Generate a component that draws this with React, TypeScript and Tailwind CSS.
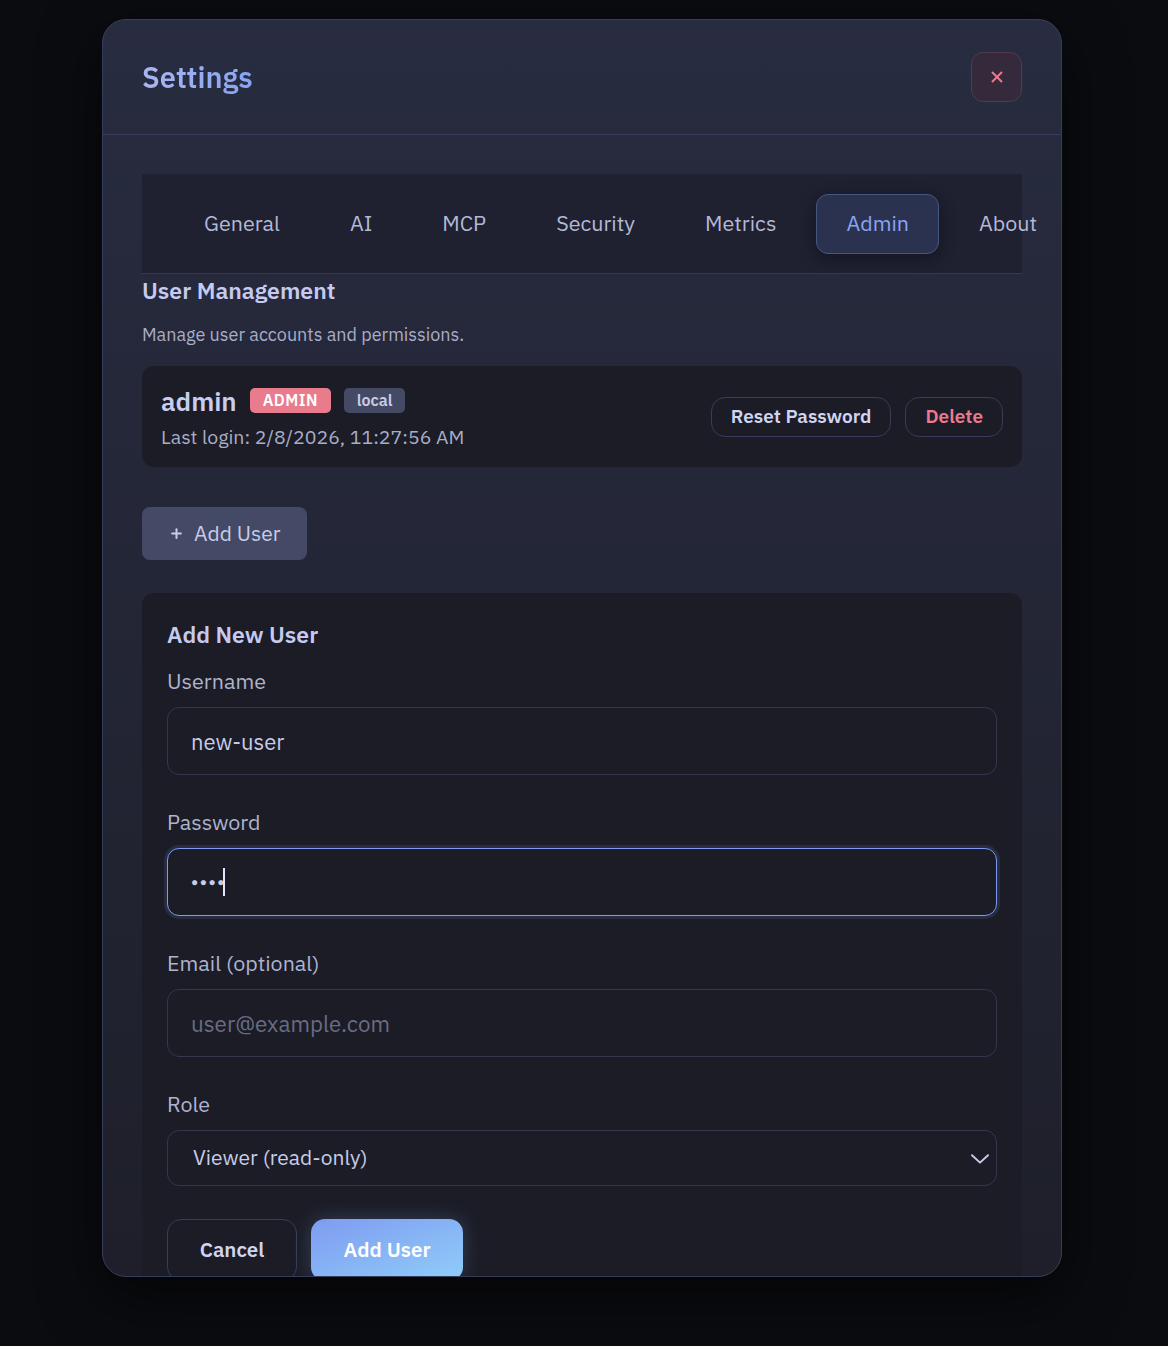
import { Plus, X } from "lucide-react";

const tabs = ["General", "AI", "MCP", "Security", "Metrics", "Admin", "About"];

const Field = ({ label, children }: { label: string; children: React.ReactNode }) => (
    <div className="flex flex-col gap-[13px]">
        <label className="text-[21.5px] leading-[26px] text-[#aeb3cf]">{label}</label>
        {children}
    </div>
);

export default function App() {
    return (
        <div className="min-h-[1346px] w-full bg-[#0b0c10] pt-[19px] font-['IBM_Plex_Sans','Noto_Sans',sans-serif]">
            <div className="ml-[102px] flex h-[1258px] w-[960px] flex-col overflow-hidden rounded-[24px] border border-[#363d5a] bg-[#22243a] bg-gradient-to-b from-[#282c40] to-[#1e1f2a] shadow-[0_20px_60px_rgba(0,0,0,0.6)]">
                {/* header */}
                <div className="flex items-center justify-between border-b border-[#363d5a] px-[39px] py-[32px]">
                    <h2 className="bg-gradient-to-r from-[#aab6f0] to-[#86a3f3] bg-clip-text text-[29px] font-semibold leading-[38px] text-transparent">
                        Settings
                    </h2>
                    <button className="flex h-[50px] w-[51px] items-center justify-center rounded-xl border border-[#553a4c] bg-[#352a3c] text-[#ec7a8c]">
                        <X size={18} strokeWidth={2.6} />
                    </button>
                </div>

                {/* body */}
                <div className="flex flex-col px-[39px] pt-[39px]">
                    <div className="flex h-[100px] items-center gap-[10px] border-b border-[#333954] bg-[#1f2030] pl-[32px]">
                        {tabs.map((t) =>
                            t === "Admin" ? (
                                <button
                                    key={t}
                                    className="h-[60px] shrink-0 rounded-xl border border-[#465683] bg-[#2b3250] px-[29px] text-[21.5px] text-[#89a5f3] shadow-[0_4px_16px_rgba(0,0,0,0.35)]"
                                >
                                    {t}
                                </button>
                            ) : (
                                <button key={t} className="h-[60px] shrink-0 px-[30px] text-[21.5px] text-[#b4b9d6]">
                                    {t}
                                </button>
                            )
                        )}
                    </div>

                    <h3 className="mt-[2px] text-[23px] font-semibold leading-[28px] text-[#c5cbf0]">User Management</h3>
                    <p className="mt-[19px] text-[18px] leading-[24px] text-[#a9adc6]">
                        Manage user accounts and permissions.
                    </p>

                    {/* user card */}
                    <div className="mt-[19px] flex h-[101px] items-center justify-between rounded-xl bg-[#1b1c26] px-[19px]">
                        <div className="flex flex-col gap-[6px] pt-[2px]">
                            <div className="flex items-center gap-[13px]">
                                <span className="text-[26px] font-semibold leading-[32px] text-[#c8cdf2]">admin</span>
                                <span className="rounded-[5px] bg-[#e97c8c] px-[13px] text-[16px] font-semibold leading-[25px] tracking-wide text-white">
                                    ADMIN
                                </span>
                                <span className="rounded-[5px] bg-[#444964] px-[13px] text-[16px] font-semibold leading-[25px] text-[#c8cce8]">
                                    local
                                </span>
                            </div>
                            <span className="text-[19.5px] leading-[28px] text-[#a9adc6]">Last login: 2/8/2026, 11:27:56 AM</span>
                        </div>
                        <div className="flex items-center gap-[14px]">
                            <button className="h-[40px] rounded-[14px] border border-[#363d5a] px-[19px] text-[19px] font-semibold text-[#d0d4f2]">
                                Reset Password
                            </button>
                            <button className="h-[40px] rounded-[14px] border border-[#363d5a] px-[19px] text-[19px] font-semibold text-[#ec7a8c]">
                                Delete
                            </button>
                        </div>
                    </div>

                    <div className="mt-[40px]">
                        <button className="flex h-[53px] items-center gap-[10px] rounded-lg bg-[#444a66] px-[27px] text-[21px] text-[#c8cce8]">
                            <Plus size={15} strokeWidth={3.2} />
                            Add User
                        </button>
                    </div>

                    {/* add new user form */}
                    <div className="mt-[33px] flex flex-col rounded-xl bg-[#1b1c26] px-[25px] pb-[30px] pt-[27px]">
                        <h4 className="text-[23px] font-semibold leading-[28px] text-[#c5cbf0]">Add New User</h4>
                        <div className="mt-[20px] flex flex-col gap-[34px]">
                            <Field label="Username">
                                <input
                                    readOnly
                                    value="new-user"
                                    className="h-[68px] rounded-xl border border-[#333850] bg-[#1b1c26] px-[23px] text-[22px] text-[#c8cce8] outline-none"
                                />
                            </Field>
                            <Field label="Password">
                                <div className="flex h-[68px] items-center rounded-xl border border-[#7b9af0] bg-[#1b1c26] px-[23px] shadow-[0_0_0_3px_rgba(90,110,170,0.2)]">
                                    <span className="text-[12px] tracking-[1.5px] text-[#c8cce8]">●●●●</span>
                                    <span className="ml-[-3px] h-[28px] w-[2px] bg-[#e0e4ff]" />
                                </div>
                            </Field>
                            <Field label="Email (optional)">
                                <input
                                    readOnly
                                    placeholder="user@example.com"
                                    className="h-[68px] rounded-xl border border-[#333850] bg-[#1b1c26] px-[23px] text-[22.4px] text-[#c8cce8] outline-none placeholder:text-[#686c84]"
                                />
                            </Field>
                            <Field label="Role">
                                <div className="flex h-[56px] items-center justify-between rounded-xl border border-[#333850] bg-[#1b1c26] pl-[25px] pr-[7px] text-[21px] text-[#c8cce8]">
                                    <span>Viewer (read-only)</span>
                                    <svg width="18" height="10" viewBox="0 0 18 10" fill="none" className="mt-[2px]">
                                        <path d="M1 1.2 9 8.6 17 1.2" stroke="#c8cce8" strokeWidth="1.9" strokeLinecap="round" strokeLinejoin="round" />
                                    </svg>
                                </div>
                            </Field>
                        </div>
                        <div className="mt-[33px] flex gap-[14px]">
                            <button className="h-[62px] w-[130px] rounded-[14px] border border-[#363d5a] text-[20.5px] font-semibold text-[#d0d4f2]">
                                Cancel
                            </button>
                            <button className="h-[62px] w-[152px] rounded-[14px] bg-gradient-to-br from-[#7f9bf0] to-[#8fcdf9] text-[20.5px] font-semibold text-white shadow-[0_0_20px_rgba(130,170,240,0.25)]">
                                Add User
                            </button>
                        </div>
                    </div>
                </div>
            </div>
        </div>
    );
}
